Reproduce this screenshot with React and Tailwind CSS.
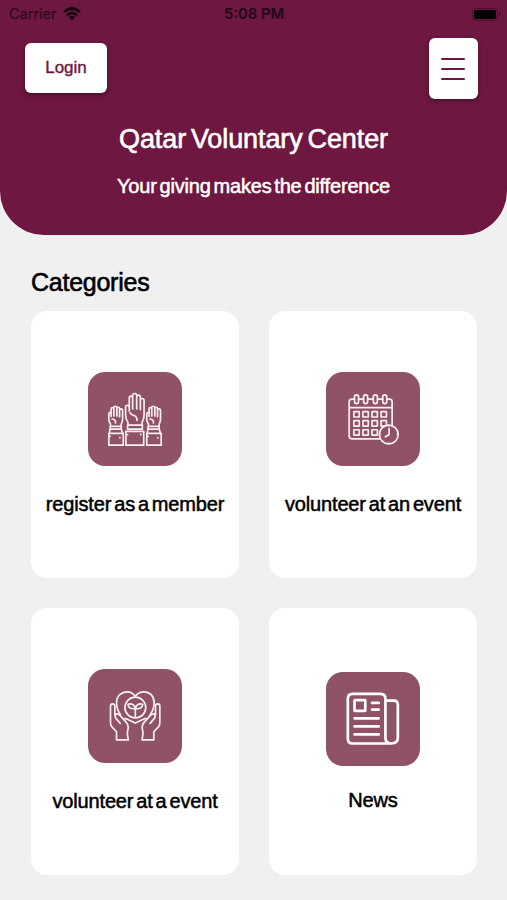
import React from "react";

const line = {
  fill: "none",
  stroke: "#fbeff3",
  strokeLinecap: "round",
  strokeLinejoin: "round",
};

function SideHand({ x }) {
  return (
    <g transform={`translate(${x} 0)`}>
      <path d="M92 184V177Q87 171 87 163V147Q87 142 91 142Q94 142 94 147V154V132Q94 128 98 128Q102 128 102 132V153M102 132V128Q102 124 106 124Q111 124 111 128V153M111 130Q111 127 115 127Q119 127 119 131V155M119 137Q119 132 123 132Q128 132 128 137V163Q128 171 124 177V184" />
      <path d="M97 162Q108 163 107 174M91 184H124V192H91Z" />
      <path d="M87 205H130V240H87ZM91 192L88 205M124 192L128 205" />
      <path d="M120 217V218M87 214H91" />
    </g>
  );
}

function HandsIcon() {
  return (
    <svg viewBox="25 22 280 280" className="size-full" {...line} strokeWidth="5">
      <SideHand x={0} />
      <SideHand x={113} />
      <path d="M144 179V172Q137 162 137 151V127Q137 121 142 121Q148 121 148 128V138V100Q148 94 152 94Q158 94 158 100V132M158 99V91Q158 86 164 86Q170 86 170 91V132M170 96Q170 91 175 91Q181 91 181 97V134M181 106Q181 101 187 101Q192 101 192 107V150Q192 162 186 172V179" />
      <path d="M150 143Q156 152 164 152Q171 156 171 166M143 180H187V192H143Z" />
      <path d="M138 199H191V240H138ZM182 208V209M138 209H143" />
    </svg>
  );
}

function CalendarIcon() {
  const cells = [
    [108, 140], [135, 140], [162, 140], [189, 140],
    [108, 167], [135, 167], [162, 167], [189, 167],
    [108, 194], [135, 194], [162, 194],
  ];
  return (
    <svg viewBox="25 22 280 280" className="size-full" {...line} strokeWidth="5">
      <path d="M109 103H102Q94 103 94 111V213Q94 221 102 221H184M122 103H136M150 103H165M179 103H194M207 103H214Q222 103 222 111V184M94 128H222" />
      {[110, 137, 166, 194].map((x) => (
        <rect key={x} x={x} y="90" width="12" height="26" rx="6" />
      ))}
      {cells.map(([x, y]) => (
        <rect key={`${x}-${y}`} x={x} y={y} width="16" height="16" rx="1" />
      ))}
      <circle cx="212" cy="208" r="28" fill="#8f5365" />
      <path d="M213 190V208L202 215" />
      <path d="M212 184V185M212 231V232M188 208H189M235 208H236" strokeWidth="2" />
    </svg>
  );
}

function PalmShape() {
  return (
    <path d="M121 184L108 169Q103 160 109 156Q115 154 121 161L139 181Q145 188 145 196L142 213L145 233H110V209L97 195Q92 190 92 182V133Q92 126 98 126Q105 126 105 133V159" />
  );
}

function HeartIcon() {
  return (
    <svg viewBox="25 22 280 280" className="size-full" {...line} strokeWidth="5">
      <path d="M122 158Q110 143 110 122C110 101 126 90 141 90C153 90 161 96 166 103C171 96 180 90 192 90C208 90 222 102 222 122Q222 143 210 158M135 169Q148 175 166 183Q184 175 197 169" />
      <circle cx="166" cy="137" r="31" />
      <path d="M166 164V140M165 140C151 142 145 136 144 127C157 124 165 129 165 140ZM167 140C167 129 175 124 188 127C187 136 181 142 167 140Z" />
      <PalmShape />
      <g transform="translate(331 0) scale(-1 1)">
        <PalmShape />
      </g>
    </svg>
  );
}

function NewsIcon() {
  return (
    <svg viewBox="25 30 280 280" className="size-full" {...line} stroke="#ffffff" strokeWidth="8">
      <path d="M219 243H104Q90 243 90 229V110Q90 95 104 95H187Q202 95 202 110V226Q202 243 219 243Q239 243 239 226V128Q239 115 227 115H202" />
      <rect x="110" y="114" width="32" height="32" rx="1" />
      <path d="M162 122H182M162 142H182M110 168H182M110 192H182M110 216H182" />
    </svg>
  );
}

function Card({ label, labelClass, tileClass, children }) {
  return (
    <div className="flex h-[267px] flex-col items-center rounded-2xl bg-white">
      <div className={`size-[94px] shrink-0 overflow-hidden rounded-[17px] bg-[#8f5365] ${tileClass}`}>{children}</div>
      <p
        className={`whitespace-nowrap text-xl leading-6 tracking-[-0.15px] text-black [-webkit-text-stroke:0.5px_black] [word-spacing:-2.5px] ${labelClass}`}
      >
        {label}
      </p>
    </div>
  );
}

export default function App() {
  return (
    <div className="h-[900px] w-[507px] overflow-hidden bg-[#f0f0f0] font-['Liberation_Sans',Arial,sans-serif]">
      <header className="h-[235px] rounded-b-[44px] bg-[#6e1740] text-white">
        <div className="grid h-7 grid-cols-3 items-center pl-[9px] pr-[6px] font-['Inter',sans-serif] text-[#210618]">
          <div className="flex items-center gap-[6px]">
            <span className="text-[14.5px] leading-5">Carrier</span>
            <svg viewBox="0 0 18 14" className="h-[14px] w-[18px]" fill="none" stroke="#16030f" strokeWidth="2.7">
              <path d="M1 5Q9 -2 17 5M4 8.2Q9 3.8 14 8.2" />
              <path d="M5.8 10.2Q9 7.5 12.2 10.2L9 13.5Z" fill="#16030f" stroke="none" />
            </svg>
          </div>
          <span className="-ml-[2px] text-center text-[14.8px] font-semibold leading-5">5:08 PM</span>
          <div className="flex items-center justify-end gap-px">
            <div className="h-[13px] w-[26px] rounded-[4px] border border-[#4b0e2f] p-px">
              <div className="h-full rounded-[2px] bg-black" />
            </div>
            <div className="h-1 w-[2px] rounded-r bg-[#4b0e2f]" />
          </div>
        </div>
        <div className="flex items-start justify-between pl-[25px] pr-[29px] pt-[10px]">
          <button className="mt-[5px] h-[50px] w-[82px] rounded-[6px] bg-white pb-px text-[17px] text-[#6e1740] shadow-[0_2px_4px_rgba(0,0,0,0.35)] [-webkit-text-stroke:0.4px_#6e1740]">
            Login
          </button>
          <button className="flex h-[61px] w-[49px] flex-col items-center justify-center gap-2 rounded-[6px] bg-white pr-px shadow-[0_2px_4px_rgba(0,0,0,0.35)]">
            <span className="h-[2px] w-6 rounded bg-[#6e1740]" />
            <span className="h-[2px] w-6 rounded bg-[#6e1740]" />
            <span className="h-[2px] w-6 rounded bg-[#6e1740]" />
          </button>
        </div>
        <h1 className="mt-6 text-center text-[27px] leading-8 tracking-[-0.1px] [-webkit-text-stroke:0.6px_white] [word-spacing:-2.5px]">
          Qatar Voluntary Center
        </h1>
        <p className="mt-[19px] text-center text-xl leading-6 tracking-[-0.19px] [-webkit-text-stroke:0.5px_white] [word-spacing:-2.5px]">
          Your giving makes the difference
        </p>
      </header>
      <main className="px-[31px] pt-8">
        <h2 className="text-[25px] leading-[30px] tracking-[-0.25px] text-black [-webkit-text-stroke:0.6px_black]">
          Categories
        </h2>
        <div className="mt-[14px] grid grid-cols-[208px_208px] gap-[30px]">
          <Card label="register as a member" tileClass="mt-[61px]" labelClass="mt-[26px]">
            <HandsIcon />
          </Card>
          <Card label="volunteer at an event" tileClass="mt-[61px]" labelClass="mt-[26px]">
            <CalendarIcon />
          </Card>
          <Card label="volunteer at a event" tileClass="mt-[61px]" labelClass="mt-[26px]">
            <HeartIcon />
          </Card>
          <Card label="News" tileClass="mt-[64px]" labelClass="mt-[22px]">
            <NewsIcon />
          </Card>
        </div>
      </main>
    </div>
  );
}
